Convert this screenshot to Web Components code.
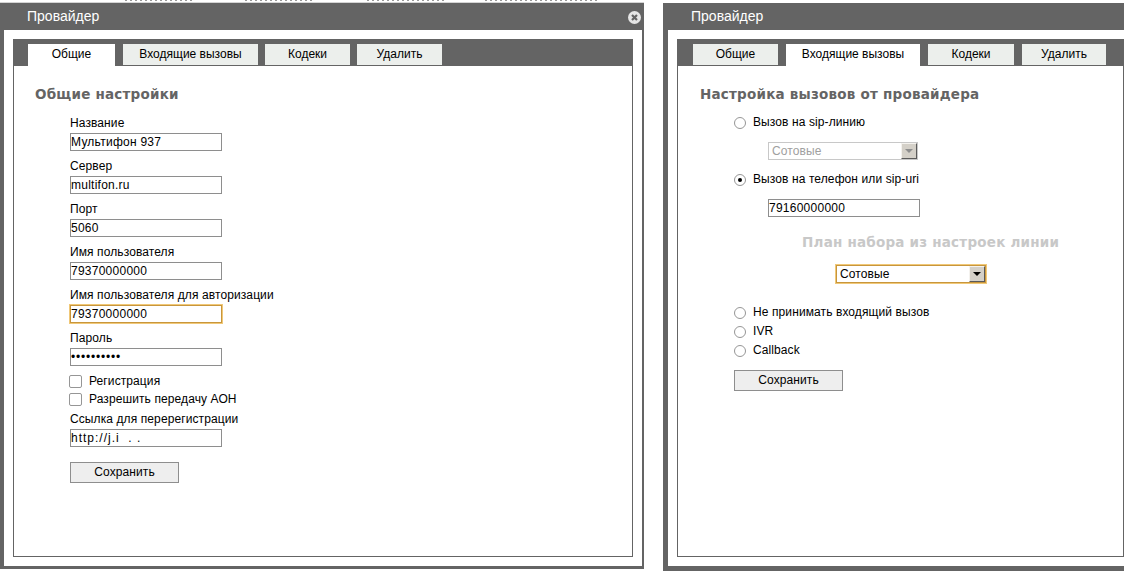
<!DOCTYPE html>
<html>
<head>
<meta charset="utf-8">
<title>Провайдер</title>
<style>
    html, body { margin: 0; height: 572px; overflow: hidden; background: #fff; }
    body {
        font: 12px/15px "Liberation Sans", Arial, sans-serif;
        letter-spacing: 0.1px;
        color: #000;
    }
    .windows { display: flex; align-items: flex-start; }
</style>
</head>
<body>
<page-strip></page-strip>
<div class="windows">
<provider-window closable style="--win-w:644px;--win-h:566px;--border-l:4px;--border-r:2px;--border-b:3px;--title-pad:27px;--inner-l:9px;--inner-r:9px;">
    <tab-bar active="0" slot="tabs"></tab-bar>
    <section-title>Общие настройки</section-title>
    <form-column>
        <text-field label="Название" value="Мультифон 937"></text-field>
        <text-field label="Сервер" value="multifon.ru"></text-field>
        <text-field label="Порт" value="5060"></text-field>
        <text-field label="Имя пользователя" value="79370000000"></text-field>
        <text-field label="Имя пользователя для авторизации" value="79370000000" focused></text-field>
        <text-field label="Пароль" value="••••••••••" secret></text-field>
        <check-row style="margin-top:-1px">Регистрация</check-row>
        <check-row style="margin-bottom:3px">Разрешить передачу АОН</check-row>
        <text-field label="Ссылка для перерегистрации" value="http://j.i&nbsp;&nbsp;.&nbsp;." style="--value-spacing:1px"></text-field>
        <save-button style="margin-top:8px"></save-button>
    </form-column>
</provider-window>

<provider-window style="--win-w:461px;--win-h:568px;--margin-l:19px;--border-l:5px;--border-r:0px;--border-b:5px;--title-pad:28px;--inner-l:9px;--inner-r:0px;">
    <tab-bar active="1" slot="tabs"></tab-bar>
    <section-title style="padding-left:22px">Настройка вызовов от провайдера</section-title>
    <calls-form></calls-form>
</provider-window>
</div>

<script>
class PageStrip extends HTMLElement {
    constructor() {
        super();
        this.attachShadow({ mode: 'open' });
        this.shadowRoot.innerHTML = `
            <style>
                :host {
                    display: block;
                    box-sizing: border-box;
                    width: 644px;
                    height: 3px;
                    padding-left: 125px;
                    background: #fff;
                    border-bottom: 1px solid #d4d4d4;
                }
                div { display: flex; height: 1px; }
                i {
                    display: block;
                    height: 1px;
                    background: repeating-linear-gradient(90deg, #999 0 2px, transparent 2px 5px);
                }
            </style>
            <div>
                <i style="width:70px;margin-right:50px"></i>
                <i style="width:70px;margin-right:52px"></i>
                <i style="width:78px;margin-right:40px"></i>
                <i style="width:115px"></i>
            </div>
        `;
    }
}

const windowTemplate = document.createElement('template');
windowTemplate.innerHTML = `
    <style>
        :host {
            display: block;
            flex: none;
            box-sizing: border-box;
            width: var(--win-w);
            height: var(--win-h);
            margin-left: var(--margin-l, 0);
        }
        .frame {
            height: 100%;
            box-sizing: border-box;
            display: flex;
            flex-direction: column;
            background: #fff;
            border-style: solid;
            border-color: #646464;
            border-width: 0 var(--border-r) var(--border-b) var(--border-l);
        }
        .title {
            position: relative;
            flex: none;
            height: 27px;
            margin-left: calc(0px - var(--border-l));
            margin-right: calc(0px - var(--border-r));
            padding-left: var(--title-pad);
            background: #646464;
            color: #fff;
            font: 14px/27px "Liberation Sans", Arial, sans-serif;
            letter-spacing: 0;
        }
        .close {
            position: absolute;
            right: 3px;
            top: 8px;
            display: none;
        }
        :host([closable]) .close { display: block; }
        .inner {
            flex: 1;
            display: flex;
            flex-direction: column;
            margin: 9px var(--inner-r) 9px var(--inner-l);
            border: solid #646464;
            border-width: 0 1px 1px 1px;
        }
        .body { flex: 1; }
    </style>
    <div class="frame">
        <div class="title">Провайдер
            <svg class="close" width="13" height="13" viewBox="0 0 13 13">
                <circle cx="6.5" cy="6.5" r="6.5" fill="#e6e6e6"/>
                <path d="M4 4l5 5M9 4l-5 5" stroke="#646464" stroke-width="2.2"/>
            </svg>
        </div>
        <div class="inner">
            <slot name="tabs"></slot>
            <div class="body"><slot></slot></div>
        </div>
    </div>
`;

class ProviderWindow extends HTMLElement {
    constructor() {
        super();
        this.attachShadow({ mode: 'open' });
        this.shadowRoot.appendChild(windowTemplate.content.cloneNode(true));
    }
}

const TABS = [
    { name: 'Общие', width: [87, 85] },
    { name: 'Входящие вызовы', width: [135, 134] },
    { name: 'Кодеки', width: [85, 86] },
    { name: 'Удалить', width: [85, 84] }
];

class TabBar extends HTMLElement {
    constructor() {
        super();
        this.attachShadow({ mode: 'open' });
    }
    connectedCallback() {
        const active = Number(this.getAttribute('active'));
        const which = active === 0 ? 0 : 1;
        const gaps = active === 0 ? [8, 7, 7, 0] : [8, 8, 8, 0];
        const items = TABS.map((tab, i) =>
            `<div class="tab ${i === active ? 'on' : ''}" style="width:${tab.width[which]}px;margin-right:${gaps[i]}px">${tab.name}</div>`
        ).join('');
        this.shadowRoot.innerHTML = `
            <style>
                :host {
                    display: flex;
                    box-sizing: border-box;
                    height: 27px;
                    margin: 0 -1px;
                    padding: 5px 0 0 ${active === 0 ? 15 : 16}px;
                    background: #646464;
                    letter-spacing: 0;
                }
                .tab {
                    height: 21px;
                    text-align: center;
                    line-height: 20px;
                    background: #ecefec;
                    color: #000;
                }
                .tab.on { height: 22px; background: #fff; }
            </style>
            ${items}
        `;
    }
}

class SectionTitle extends HTMLElement {
    constructor() {
        super();
        this.attachShadow({ mode: 'open' });
        this.shadowRoot.innerHTML = `
            <style>
                :host {
                    display: block;
                    padding: 19px 0 0 21px;
                    height: 18px;
                    font: bold 13.5px/18px "DejaVu Sans", sans-serif;
                    letter-spacing: 0.22px;
                    color: #646464;
                }
            </style>
            <slot></slot>
        `;
    }
}

class FormColumn extends HTMLElement {
    constructor() {
        super();
        this.attachShadow({ mode: 'open' });
        this.shadowRoot.innerHTML = `
            <style>
                :host {
                    display: block;
                    padding: 12px 0 0 56px;
                }
            </style>
            <slot></slot>
        `;
    }
}

class TextField extends HTMLElement {
    constructor() {
        super();
        this.attachShadow({ mode: 'open' });
    }
    connectedCallback() {
        const focused = this.hasAttribute('focused');
        const secret = this.hasAttribute('secret');
        this.shadowRoot.innerHTML = `
            <style>
                :host { display: block; height: 43px; }
                .label { height: 18px; line-height: 16px; white-space: nowrap; }
                .box {
                    box-sizing: border-box;
                    width: 152px;
                    height: 18px;
                    border: 1px solid ${focused ? '#c8963c' : '#8e8e8e'};
                    ${focused ? 'outline: 1px solid #f0c878;' : ''}
                    line-height: 16px;
                    letter-spacing: ${secret ? '0.8px' : 'var(--value-spacing, 0.25px)'};
                    white-space: nowrap;
                    overflow: hidden;
                }
            </style>
            <div class="label">${this.getAttribute('label')}</div>
            <div class="box">${this.getAttribute('value')}</div>
        `;
    }
}

class CheckRow extends HTMLElement {
    constructor() {
        super();
        this.attachShadow({ mode: 'open' });
        this.shadowRoot.innerHTML = `
            <style>
                :host {
                    display: flex;
                    align-items: center;
                    height: 18px;
                    margin-left: -1px;
                    gap: 7px;
                    white-space: nowrap;
                }
                i {
                    box-sizing: border-box;
                    width: 13px;
                    height: 13px;
                    border: 1px solid #969696;
                    border-radius: 2px;
                }
            </style>
            <i></i><span><slot></slot></span>
        `;
    }
}

class SaveButton extends HTMLElement {
    constructor() {
        super();
        this.attachShadow({ mode: 'open' });
        this.shadowRoot.innerHTML = `
            <style>
                :host {
                    display: block;
                    box-sizing: border-box;
                    width: 109px;
                    height: 21px;
                    border: 1px solid #8e8e8e;
                    background: #eeeeee;
                    text-align: center;
                    line-height: 19px;
                }
            </style>
            Сохранить
        `;
    }
}

class RadioRow extends HTMLElement {
    constructor() {
        super();
        this.attachShadow({ mode: 'open' });
        this.shadowRoot.innerHTML = `
            <style>
                :host {
                    display: flex;
                    align-items: center;
                    height: 19px;
                    gap: 7px;
                    white-space: nowrap;
                }
                i {
                    box-sizing: border-box;
                    width: 12px;
                    height: 12px;
                    border: 1px solid #969696;
                    border-radius: 50%;
                    display: flex;
                    align-items: center;
                    justify-content: center;
                }
                :host([checked]) i::after {
                    content: "";
                    width: 4px;
                    height: 4px;
                    border-radius: 50%;
                    background: #000;
                }
            </style>
            <i></i><span><slot></slot></span>
        `;
    }
}

class SelectBox extends HTMLElement {
    constructor() {
        super();
        this.attachShadow({ mode: 'open' });
        this.shadowRoot.innerHTML = `
            <style>
                :host {
                    display: flex;
                    box-sizing: border-box;
                    width: var(--w);
                    height: 18px;
                    border: 1px solid #c8c8c8;
                    padding-left: 3px;
                    line-height: 17px;
                    color: #a0a0a0;
                }
                :host([focused]) {
                    border-color: #c8963c;
                    outline: 1px solid #f0c878;
                    color: #000;
                }
                span { flex: 1; }
                b {
                    box-sizing: border-box;
                    width: 16px;
                    height: 16px;
                    background: #d4d0c8;
                    border: 1px solid;
                    border-color: #f4f2ee #5a5a5a #5a5a5a #f4f2ee;
                    display: flex;
                    align-items: center;
                    justify-content: center;
                }
                b::after {
                    content: "";
                    border: 4px solid transparent;
                    border-top: 4px solid #8e8e8e;
                    border-bottom: 0;
                }
                :host([focused]) b::after { border-top-color: #000; }
            </style>
            <span><slot></slot></span><b></b>
        `;
    }
}

class CallsForm extends HTMLElement {
    constructor() {
        super();
        this.attachShadow({ mode: 'open' });
        this.shadowRoot.innerHTML = `
            <style>
                :host { display: block; padding: 10px 0 0 56px; }
                .indent { padding-left: 34px; }
                .sub { padding-top: 10px; height: 18px; }
                .gap { height: 10px; }
                .box {
                    box-sizing: border-box;
                    width: 152px;
                    height: 18px;
                    border: 1px solid #8e8e8e;
                    line-height: 17px;
                    letter-spacing: 0.25px;
                }
                .plan {
                    padding: 16px 0 0 68px;
                    height: 18px;
                    white-space: nowrap;
                    font: bold 13.5px/18px "DejaVu Sans", sans-serif;
                    letter-spacing: 0.22px;
                    color: #c8c8c8;
                }
                .plan-select { padding: 14px 0 0 102px; }
                .rest { padding-top: 20px; }
                save-button { margin-top: 10px; }
            </style>
            <radio-row>Вызов на sip-линию</radio-row>
            <div class="indent sub"><select-box style="--w:150px">Сотовые</select-box></div>
            <div class="gap"></div>
            <radio-row checked>Вызов на телефон или sip-uri</radio-row>
            <div class="indent sub"><div class="box">79160000000</div></div>
            <div class="plan">План набора из настроек линии</div>
            <div class="plan-select"><select-box focused style="--w:150px">Сотовые</select-box></div>
            <div class="rest">
                <radio-row>Не принимать входящий вызов</radio-row>
                <radio-row>IVR</radio-row>
                <radio-row>Callback</radio-row>
                <save-button></save-button>
            </div>
        `;
    }
}

customElements.define('page-strip', PageStrip);
customElements.define('provider-window', ProviderWindow);
customElements.define('tab-bar', TabBar);
customElements.define('section-title', SectionTitle);
customElements.define('form-column', FormColumn);
customElements.define('text-field', TextField);
customElements.define('check-row', CheckRow);
customElements.define('save-button', SaveButton);
customElements.define('radio-row', RadioRow);
customElements.define('select-box', SelectBox);
customElements.define('calls-form', CallsForm);
</script>
</body>
</html>
